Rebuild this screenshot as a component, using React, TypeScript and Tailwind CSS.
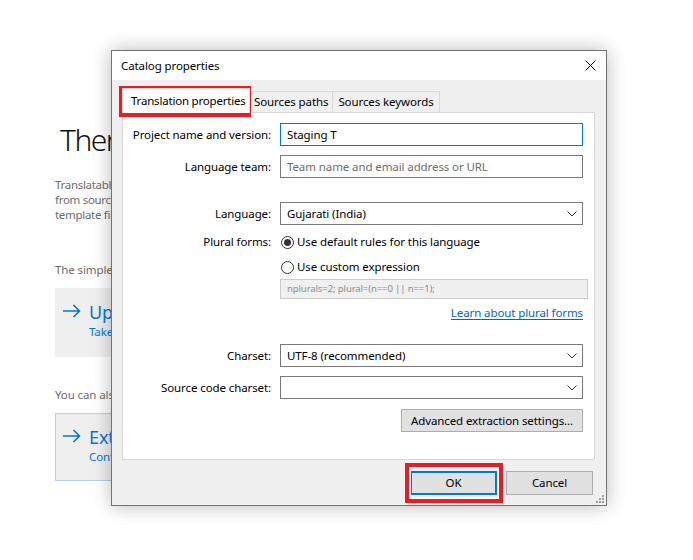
import React from 'react';

// Catalog properties dialog floating over a half-hidden welcome page.

function Chevron() {
  return (
    <svg width="10" height="6" viewBox="0 0 10 6" className="absolute right-[5px] top-1/2 -translate-y-1/2">
      <polyline points="0.5,0.5 5,5 9.5,0.5" fill="none" stroke="#333" strokeWidth="1" />
    </svg>
  );
}

function Arrow() {
  return (
    <svg width="18" height="14" viewBox="0 0 18 14" className="shrink-0">
      <path d="M0 7H16.5M10.5 1L16.5 7L10.5 13" fill="none" stroke="#0078d7" strokeWidth="1.6" />
    </svg>
  );
}

function Radio({ checked }: { checked?: boolean }) {
  return (
    <span className="flex h-[13px] w-[13px] items-center justify-center rounded-full border border-[#333] bg-white">
      {checked && <span className="h-[7px] w-[7px] rounded-full bg-[#333]" />}
    </span>
  );
}

function Row({ label, top, children }: { label?: string; top: string; children: React.ReactNode }) {
  return (
    <div className={`flex items-center ${top}`}>
      <div className="w-[148px] shrink-0 whitespace-nowrap text-right">{label}</div>
      <div className="ml-[9px] w-[303px]">{children}</div>
    </div>
  );
}

export default function App() {
  return (
    <div className="relative h-[560px] w-[693px] overflow-hidden bg-white font-['Segoe_UI','Noto_Sans',sans-serif] text-[11.5px] tracking-[-0.1px] text-black">
      {/* background page */}
      <div className="pl-[55px] pt-[122px]">
        <h1 className="ml-[5px] whitespace-nowrap text-[30px] font-light leading-[36px] tracking-[-1.5px] text-[#111]">There is nothing to translate yet</h1>
        <p className="mt-[19px] leading-[15px] tracking-[-0.3px] text-[#6d6d6d]">
          Translatable content is extracted
          <br />
          from source code files or from a
          <br />
          template file.
        </p>
        <p className="mt-[40px] leading-[15px] text-[#6d6d6d]">The simplest way to start is to use the template.</p>
        <div className="mt-[11px] flex h-[69px] w-[420px] gap-[8px] bg-[#efefef] pl-[8px] pt-[14px]">
          <div className="pt-[2px]"><Arrow /></div>
          <div className="text-[#0078d7]">
            <div className="text-[18px] leading-[20px]">Update from template</div>
            <div className="mt-[2px] leading-[15px]">Take strings from a POT file.</div>
          </div>
        </div>
        <p className="mt-[30px] leading-[15px] text-[#6d6d6d]">You can also extract strings directly from sources.</p>
        <div className="mt-[11px] flex h-[68px] w-[420px] gap-[8px] border border-[#b3d1ee] bg-[#efefef] pl-[7px] pt-[13px]">
          <div className="pt-[2px]"><Arrow /></div>
          <div className="text-[#0078d7]">
            <div className="text-[18px] leading-[20px]">Extract from sources</div>
            <div className="mt-[2px] leading-[15px]">Configure source code extraction.</div>
          </div>
        </div>
      </div>

      {/* dialog window */}
      <div className="absolute left-[111px] top-[50px] flex h-[456px] w-[496px] flex-col border border-[#737373] bg-[#f0f0f0] shadow-[0_0_18px_rgba(0,0,0,0.28)]">
        <div className="flex h-[29px] shrink-0 items-center justify-between bg-white pl-[9px] pr-[10px]">
          <span>Catalog properties</span>
          <svg width="11" height="11" viewBox="0 0 11 11">
            <path d="M0.5 0.5L10.5 10.5M10.5 0.5L0.5 10.5" stroke="#000" strokeWidth="1" />
          </svg>
        </div>

        <div className="flex flex-1 flex-col pl-[10px] pr-[11px] pt-[8px]">
          <div className="flex items-end whitespace-nowrap">
            <div className="relative z-10 -mb-px flex h-[25px] w-[128px] items-center border border-b-0 border-[#d9d9d9] bg-white pl-[8px] tracking-[-0.2px]">
              Translation properties
            </div>
            <div className="flex h-[21px] items-center border border-b-0 border-l-0 border-[#d9d9d9] px-[4px]">Sources paths</div>
            <div className="flex h-[21px] items-center border border-b-0 border-l-0 border-[#d9d9d9] px-[5px]">Sources keywords</div>
          </div>

          <div className="flex h-[348px] flex-col border border-[#d9d9d9] bg-white pt-[10px]">
            <Row label="Project name and version:" top="">
              <div className="flex h-[23px] items-center border border-[#0078d7] px-[6px]">Staging T</div>
            </Row>
            <Row label="Language team:" top="mt-[9px]">
              <div className="flex h-[23px] items-center border border-[#7a7a7a] px-[6px] text-[#6d6d6d]">Team name and email address or URL</div>
            </Row>
            <Row label="Language:" top="mt-[24px]">
              <div className="relative flex h-[23px] items-center border border-[#7a7a7a] px-[6px]">
                Gujarati (India)
                <Chevron />
              </div>
            </Row>
            <Row label="Plural forms:" top="mt-[7px]">
              <div className="flex h-[20px] items-center gap-[3px] pl-[1px]">
                <Radio checked />
                <span>Use default rules for this language</span>
              </div>
            </Row>
            <Row top="mt-[5px]">
              <div className="flex h-[20px] items-center gap-[3px] pl-[1px]">
                <Radio />
                <span>Use custom expression</span>
              </div>
            </Row>
            <Row top="mt-[2px]">
              <div className="flex h-[20px] w-[308px] items-center whitespace-nowrap border border-[#cccccc] bg-[#f0f0f0] px-[6px] text-[9.5px] text-[#8c8c8c]">
                nplurals=2; plural=(n==0 || n==1);
              </div>
            </Row>
            <Row top="mt-[6px]">
              <div className="flex h-[16px] items-center justify-end">
                <span className="text-[#0066cc] underline underline-offset-2">Learn about plural forms</span>
              </div>
            </Row>
            <Row label="Charset:" top="mt-[23px]">
              <div className="relative flex h-[23px] items-center border border-[#7a7a7a] px-[6px]">
                UTF-8 (recommended)
                <Chevron />
              </div>
            </Row>
            <Row label="Source code charset:" top="mt-[9px]">
              <div className="relative h-[23px] border border-[#7a7a7a]">
                <Chevron />
              </div>
            </Row>
            <Row top="mt-[10px]">
              <div className="flex justify-end">
                <div className="flex h-[23px] w-[182px] items-center justify-center whitespace-nowrap border border-[#adadad] bg-[#e1e1e1]">
                  Advanced extraction settings...
                </div>
              </div>
            </Row>
          </div>

          <div className="mt-[11px] flex justify-end gap-[9px] pr-[2px]">
            <div className="flex h-[24px] w-[87px] items-center justify-center border-2 border-[#0078d7] bg-[#e1e1e1]">OK</div>
            <div className="flex h-[24px] w-[87px] items-center justify-center border border-[#adadad] bg-[#e1e1e1]">Cancel</div>
          </div>
        </div>

        <svg width="8" height="8" viewBox="0 0 8 8" className="absolute bottom-[2px] right-[2px]">
          <g fill="#a0a0a0">
            <rect x="6" y="0" width="2" height="2" />
            <rect x="3" y="3" width="2" height="2" />
            <rect x="6" y="3" width="2" height="2" />
            <rect x="0" y="6" width="2" height="2" />
            <rect x="3" y="6" width="2" height="2" />
            <rect x="6" y="6" width="2" height="2" />
          </g>
        </svg>
      </div>

      {/* red annotation boxes */}
      <div className="absolute left-[119px] top-[86px] h-[31px] w-[132px] border-4 border-[#e81c24]" />
      <div className="absolute left-[405px] top-[463px] h-[40px] w-[98px] border-4 border-[#e81c24] shadow-[inset_0_0_0_2px_#fff]" />
    </div>
  );
}
